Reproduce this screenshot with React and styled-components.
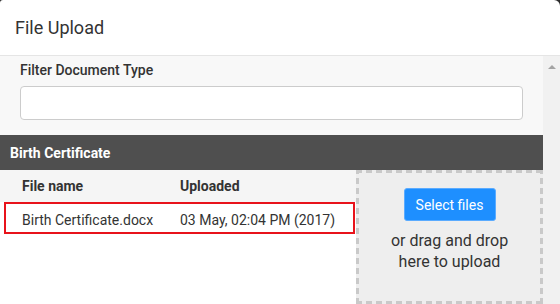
import React from "react";
import styled, { createGlobalStyle } from "styled-components";

const GlobalStyle = createGlobalStyle`
  html, body {
    margin: 0;
    padding: 0;
    background: #2b2b2b;
  }
  body {
    font-family: Roboto, "Liberation Sans", Arial, sans-serif;
    color: #333;
  }
`;

const Modal = styled.div`
  width: 560px;
  height: 304px;
  background: #fff;
  border-radius: 3px 6px 0 0;
  overflow: hidden;
  display: flex;
  flex-direction: column;
`;

const Header = styled.header`
  height: 55px;
  flex: none;
  display: flex;
  align-items: center;
  padding: 0 15px;
  border-bottom: 1px solid #e5e5e5;
  font-size: 18px;
  color: #333;
`;

const Body = styled.div`
  flex: 1;
  display: flex;
  min-height: 0;
`;

const Content = styled.div`
  flex: 1;
  display: flex;
  flex-direction: column;
  min-width: 0;
`;

const Scrollbar = styled.div`
  width: 17px;
  flex: none;
  background: #f1f1f1;
  display: flex;
  justify-content: center;
  padding-top: 9px;
  box-sizing: border-box;
`;

const ArrowUp = styled.div`
  width: 0;
  height: 0;
  border-left: 4px solid transparent;
  border-right: 4px solid transparent;
  border-bottom: 4px solid #a3a3a3;
`;

const FilterSection = styled.div`
  height: 79px;
  flex: none;
  box-sizing: border-box;
  background: #f8f8f8;
  padding: 6px 20px 0;
`;

const Label = styled.label`
  display: block;
  font-size: 14px;
  font-weight: 500;
  line-height: 17px;
  margin-bottom: 7px;
`;

const Input = styled.input`
  display: block;
  box-sizing: border-box;
  width: 503px;
  height: 34px;
  border: 1px solid #ccc;
  border-radius: 4px;
  background: #fff;
  outline: none;
`;

const SectionBar = styled.div`
  height: 35px;
  flex: none;
  background: #4f4f4f;
  color: #fff;
  font-size: 14px;
  font-weight: 700;
  display: flex;
  align-items: center;
  padding: 0 10px;
`;

const Split = styled.div`
  flex: 1;
  display: grid;
  grid-template-columns: 356px 1fr;
`;

const Table = styled.div`
  display: flex;
  flex-direction: column;
`;

const Row = styled.div`
  display: grid;
  grid-template-columns: 158px 1fr;
  align-items: center;
  height: 32px;
  padding-left: ${({ selected }) => (selected ? "16px" : "22px")};
  margin: ${({ selected }) => (selected ? "0 1px 0 4px" : "0")};
  padding-top: ${({ selected }) => (selected ? "3px" : "0")};
  background: ${({ head }) => (head ? "#f5f5f5" : "#fff")};
  border: ${({ selected }) => (selected ? "2px solid #e8131b" : "none")};
  font-size: 14px;
  font-weight: ${({ head }) => (head ? 700 : 400)};
  box-sizing: border-box;
`;

const Dropzone = styled.div`
  background-color: #eeeeee;
  background-image:
    repeating-linear-gradient(90deg, #c9c9c9 0 6px, transparent 6px 10px),
    repeating-linear-gradient(90deg, #c9c9c9 0 6px, transparent 6px 10px),
    repeating-linear-gradient(0deg, #c9c9c9 0 6px, transparent 6px 10px),
    repeating-linear-gradient(0deg, #c9c9c9 0 6px, transparent 6px 10px);
  background-size: 100% 3px, 100% 3px, 3px 100%, 3px 100%;
  background-position: 0 0, 0 100%, 0 0, 100% 0;
  background-repeat: no-repeat;
  display: flex;
  flex-direction: column;
  align-items: center;
  padding-top: 18px;
`;

const SelectButton = styled.button`
  width: 92px;
  height: 33px;
  background: #1e8fff;
  border: 1px solid #5aabff;
  border-radius: 3px;
  color: #fff;
  font-family: inherit;
  font-size: 14px;
  cursor: pointer;
`;

const Hint = styled.p`
  margin: 9px 0 0;
  font-size: 16px;
  line-height: 21px;
  text-align: center;
  color: #333;
`;

export default function App() {
  return (
    <>
      <GlobalStyle />
      <Modal>
        <Header>File Upload</Header>
        <Body>
          <Content>
            <FilterSection>
              <Label>Filter Document Type</Label>
              <Input type="text" />
            </FilterSection>
            <SectionBar>Birth Certificate</SectionBar>
            <Split>
              <Table>
                <Row head>
                  <span>File name</span>
                  <span>Uploaded</span>
                </Row>
                <Row selected>
                  <span>Birth Certificate.docx</span>
                  <span>03 May, 02:04 PM (2017)</span>
                </Row>
              </Table>
              <Dropzone>
                <SelectButton>Select files</SelectButton>
                <Hint>
                  or drag and drop
                  <br />
                  here to upload
                </Hint>
              </Dropzone>
            </Split>
          </Content>
          <Scrollbar>
            <ArrowUp />
          </Scrollbar>
        </Body>
      </Modal>
    </>
  );
}
